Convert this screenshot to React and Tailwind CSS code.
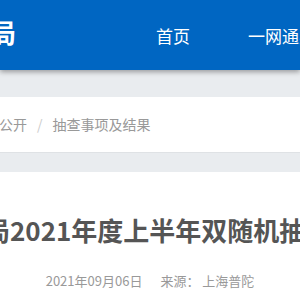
export default function App() {
  return (
    <div
      className="w-[300px] h-[300px] overflow-hidden bg-white"
      style={{ fontFamily: "'Noto Sans CJK SC', 'Noto Sans', sans-serif" }}
    >
      {/* Header */}
      <div className="relative z-10 h-[70px] bg-[#0066c2] flex items-center shadow-[0_2px_5px_rgba(0,0,0,0.35)]">
        <div className="-ml-[10px] mb-[6px] text-[26px] font-bold leading-none text-white whitespace-nowrap">
          局
        </div>
        <nav className="ml-[140px] flex items-center gap-[58px] text-[17px] leading-none text-white whitespace-nowrap">
          <span>首页</span>
          <span>一网通办</span>
        </nav>
      </div>

      {/* Gray band */}
      <div className="h-[27px] bg-[#e9ecef]"></div>

      {/* Breadcrumb */}
      <div className="h-[55px] flex items-center text-[14px] text-[#999] whitespace-nowrap">
        <span className="-ml-[1px]">公开</span>
        <span className="mx-[10px] text-[#ccc]">/</span>
        <span>抽查事项及结果</span>
      </div>

      <div className="h-[20px] border-t border-[#dfe2e5] bg-[#e9ecef]"></div>

      {/* Title */}
      <div className="pt-[38px] whitespace-nowrap">
        <h1 className="-ml-[16px] text-[26px] leading-[39px] font-bold text-[#555]">
          局2021年度上半年双随机抽查事项及结果公示
        </h1>
        <div className="mt-[22px] flex justify-center gap-[18px] text-[13px] leading-[20px] text-[#999]">
          <span>2021年09月06日</span>
          <span>来源：&nbsp;上海普陀</span>
        </div>
      </div>
    </div>
  );
}
